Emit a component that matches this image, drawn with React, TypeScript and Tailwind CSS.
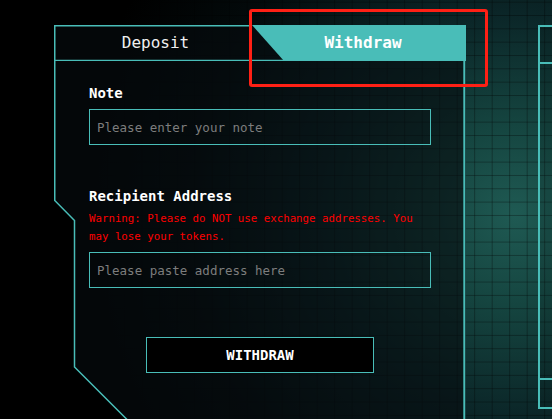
import React from 'react';

const mono = "font-['DejaVu_Sans_Mono','Liberation_Mono',monospace]";

export default function App() {
  return (
    <div
      className={`relative h-[419px] w-[552px] overflow-hidden bg-black ${mono} bg-[image:linear-gradient(rgba(0,0,0,0.32)_1px,transparent_1px),linear-gradient(90deg,rgba(0,0,0,0.32)_1px,transparent_1px),radial-gradient(circle_at_515px_215px,#1f5a53_0px,#154540_90px,#0b2628_200px,#030a0b_330px,#000_440px)] bg-[size:17.5px_13.33px,17.5px_13.33px,100%_100%] bg-[position:0_1.7px,1.7px_0,0_0]`}
    >
      <div className="flex pl-[54px] pt-[25px]">
        {/* Withdraw panel */}
        <div className="relative h-[394px] w-[412px] shrink-0">
          <svg
            className="pointer-events-none absolute inset-0 overflow-visible"
            width="412"
            height="394"
            viewBox="0 0 412 394"
          >
            <path
              d="M0 0 H412 V394 H72.5 L20.5 342 V196 L0.75 175.5 Z"
              fill="rgba(6,12,14,0.62)"
            />
            <path
              d="M198 0.75 H0.75 V175.5 L20.5 195.5 V342 L100 421.5"
              fill="none"
              stroke="#49bdb8"
              strokeWidth="1.5"
            />
            <path d="M0 35.4 H232" fill="none" stroke="#49bdb8" strokeWidth="1.4" />
            <path d="M410.3 36 V400" fill="none" stroke="#49bdb8" strokeWidth="2" />
          </svg>

          <div className="relative">
            {/* Tabs */}
            <div className="flex h-[36px]">
              <button className="flex w-[198px] items-center justify-center pl-[5px] text-[16px] text-[#f0f0f0]">
                Deposit
              </button>
              <button className="flex w-[214px] items-center justify-center bg-[#49bdb8] pl-[8px] text-[16px] font-bold text-white [clip-path:polygon(0_0,100%_0,100%_100%,32px_100%)]">
                Withdraw
              </button>
            </div>

            <div className="flex flex-col px-[35px]">
              <label className="mt-[22px] text-[14px] font-bold leading-[20px] text-white">Note</label>
              <input
                className="mt-[6px] h-[36px] w-full border border-[#49bdb8] bg-transparent px-[7px] text-[12.5px] text-white outline-none placeholder:text-[#7d7d7d]"
                placeholder="Please enter your note"
              />

              <label className="mt-[41px] text-[14px] font-bold leading-[20px] text-white">
                Recipient Address
              </label>
              <p className="mt-[4px] text-[10.75px] leading-[18px] text-[#ff0000]">
                Warning: Please do NOT use exchange addresses. You may lose your tokens.
              </p>
              <input
                className="mt-[6px] h-[36px] w-full border border-[#49bdb8] bg-transparent px-[7px] text-[12.5px] text-white outline-none placeholder:text-[#7d7d7d]"
                placeholder="Please paste address here"
              />

              <button className="mx-auto mt-[49px] h-[36px] w-[228px] border border-[#49bdb8] bg-black text-[14px] font-bold text-white">
                WITHDRAW
              </button>
            </div>
          </div>
        </div>

        {/* Right panel */}
        <div className="ml-[72px] flex h-[384px] w-[200px] shrink-0 flex-col border-b-2 border-l-2 border-t-2 border-[#49bdb8] bg-[rgba(5,20,20,0.15)]">
          <div className="h-[37px] border-b-2 border-[#49bdb8]" />
          <div className="h-[316px] border-b-2 border-[#49bdb8]" />
          <div className="flex-1" />
        </div>
      </div>

      {/* Annotation box */}
      <div className="pointer-events-none absolute left-[249px] top-[9px] h-[78px] w-[239px] rounded-[3px] border-[3px] border-[#ff2015]" />
    </div>
  );
}
